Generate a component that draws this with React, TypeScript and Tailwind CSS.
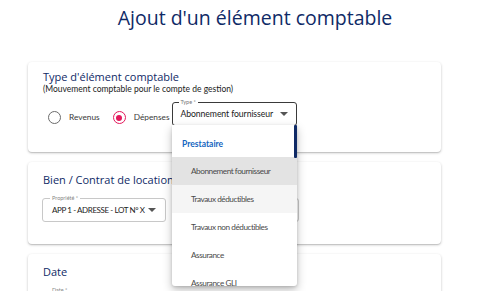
import { ReactNode } from "react"

const Card = ({ children, className }: { children: ReactNode, className?: string }) => {
  return (
    <div className={"bg-white rounded-[4px] shadow-[0_1px_3px_rgba(0,0,0,0.2),0_1px_1px_rgba(0,0,0,0.12)] px-[15px] " + (className || "")}>
      {children}
    </div>
  )
}

const Caret = () => (
  <svg width="8" height="4" viewBox="0 0 10 5" className="shrink-0">
    <path d="M0 0 L5 5 L10 0 Z" fill="#555" />
  </svg>
)

const Radio = ({ checked, label }: { checked?: boolean, label: string }) => (
  <div className="flex items-center">
    <span className={"w-[13px] h-[13px] rounded-full border-[1.5px] flex items-center justify-center " + (checked ? "border-[#e3185b]" : "border-[#6b6b6b]")}>
      {checked && <span className="w-[6px] h-[6px] rounded-full bg-[#e3185b]" />}
    </span>
    <span className="ml-[8px] text-[8.3px] text-[#3a3a3a] whitespace-nowrap">{label}</span>
  </div>
)

const menuItems = [
  { label: "Abonnement fournisseur", bg: "bg-[#e3e3e3]" },
  { label: "Travaux déductibles", bg: "bg-[#f5f5f5]" },
  { label: "Travaux non déductibles", bg: "" },
  { label: "Assurance", bg: "" },
  { label: "Assurance GLI", bg: "" },
]

export default function App() {
  return (
    <div className="relative w-[501px] h-[291px] overflow-hidden bg-white font-['Lato',sans-serif]">
      <h1 className="pt-[4px] pl-[9px] text-center text-[19.5px] leading-[28px] font-medium text-[#0f2a66] font-['Open_Sans',sans-serif]">
        Ajout d'un élément comptable
      </h1>

      <div className="mt-[30px] ml-[28px] w-[413px] flex flex-col gap-[10px]">
        <Card className="h-[90px] pt-[7px]">
          <h2 className="text-[11px] leading-[15px] font-medium text-[#0f2a66] font-['Open_Sans',sans-serif]">Type d'élément comptable</h2>
          <p className="text-[8.5px] leading-[11px] text-[#222]">(Mouvement comptable pour le compte de gestion)</p>
          <div className="mt-[7px] flex items-start">
            <div className="mt-[9px] ml-[5px] flex items-center gap-[13px]">
              <Radio label="Revenus" />
              <Radio checked label="Dépenses" />
            </div>
            <div className="relative ml-[2px] w-[125px] h-[24px] border border-[#3a3a3a] rounded-[3px] flex items-center pl-[8px] pr-[8px]">
              <span className="absolute -top-[5px] left-[6px] px-[2px] bg-white text-[5.5px] leading-[8px] text-[#777]">Type *</span>
              <span className="flex-1 text-[8.7px] tracking-[-0.1px] text-[#222] whitespace-nowrap">Abonnement fournisseur</span>
              <Caret />
            </div>
          </div>
        </Card>

        <Card className="h-[82px] pt-[10px]">
          <h2 className="text-[11px] leading-[16px] font-medium text-[#0f2a66] font-['Open_Sans',sans-serif]">Bien / Contrat de location</h2>
          <div className="mt-[10px] flex gap-[12px]">
            <div className="relative -ml-[1px] w-[124px] h-[24px] border border-[#c8c8c8] rounded-[3px] flex items-center pl-[9px] pr-[9px]">
              <span className="absolute -top-[5px] left-[7px] px-[2px] bg-white text-[5.5px] leading-[8px] text-[#888]">Propriété *</span>
              <span className="flex-1 text-[8px] tracking-[-0.4px] text-[#222] whitespace-nowrap">APP 1 - ADRESSE - LOT N° X</span>
              <Caret />
            </div>
            <div className="w-[121px] h-[24px] border border-[#c8c8c8] rounded-[3px]" />
          </div>
        </Card>

        <Card className="h-[80px] pt-[10px]">
          <h2 className="text-[11px] leading-[16px] font-medium text-[#0f2a66] font-['Open_Sans',sans-serif]">Date</h2>
          <div className="mt-[6px] ml-[9px] text-[5.5px] leading-[8px] text-[#888]">Date *</div>
        </Card>
      </div>

      <div className="absolute left-[172px] top-[125px] w-[125px] h-[161px] bg-white rounded-b-[3px] shadow-[0_4px_10px_rgba(0,0,0,0.25),0_1px_3px_rgba(0,0,0,0.15)] overflow-hidden">
        <div className="absolute right-0 top-0 w-[3px] h-[33px] bg-[#0f2a66] rounded-[1px]" />
        <div className="pt-[4px]">
          <div className="h-[28px] pt-[2px] pl-[10px] flex items-center text-[8.5px] font-bold text-[#1565c0]">Prestataire</div>
          {menuItems.map((item) => (
            <div key={item.label} className={"h-[28px] pl-[19px] flex items-center text-[8.2px] tracking-[-0.45px] text-[#4a4a4a] whitespace-nowrap " + item.bg}>
              {item.label}
            </div>
          ))}
        </div>
      </div>
    </div>
  )
}
